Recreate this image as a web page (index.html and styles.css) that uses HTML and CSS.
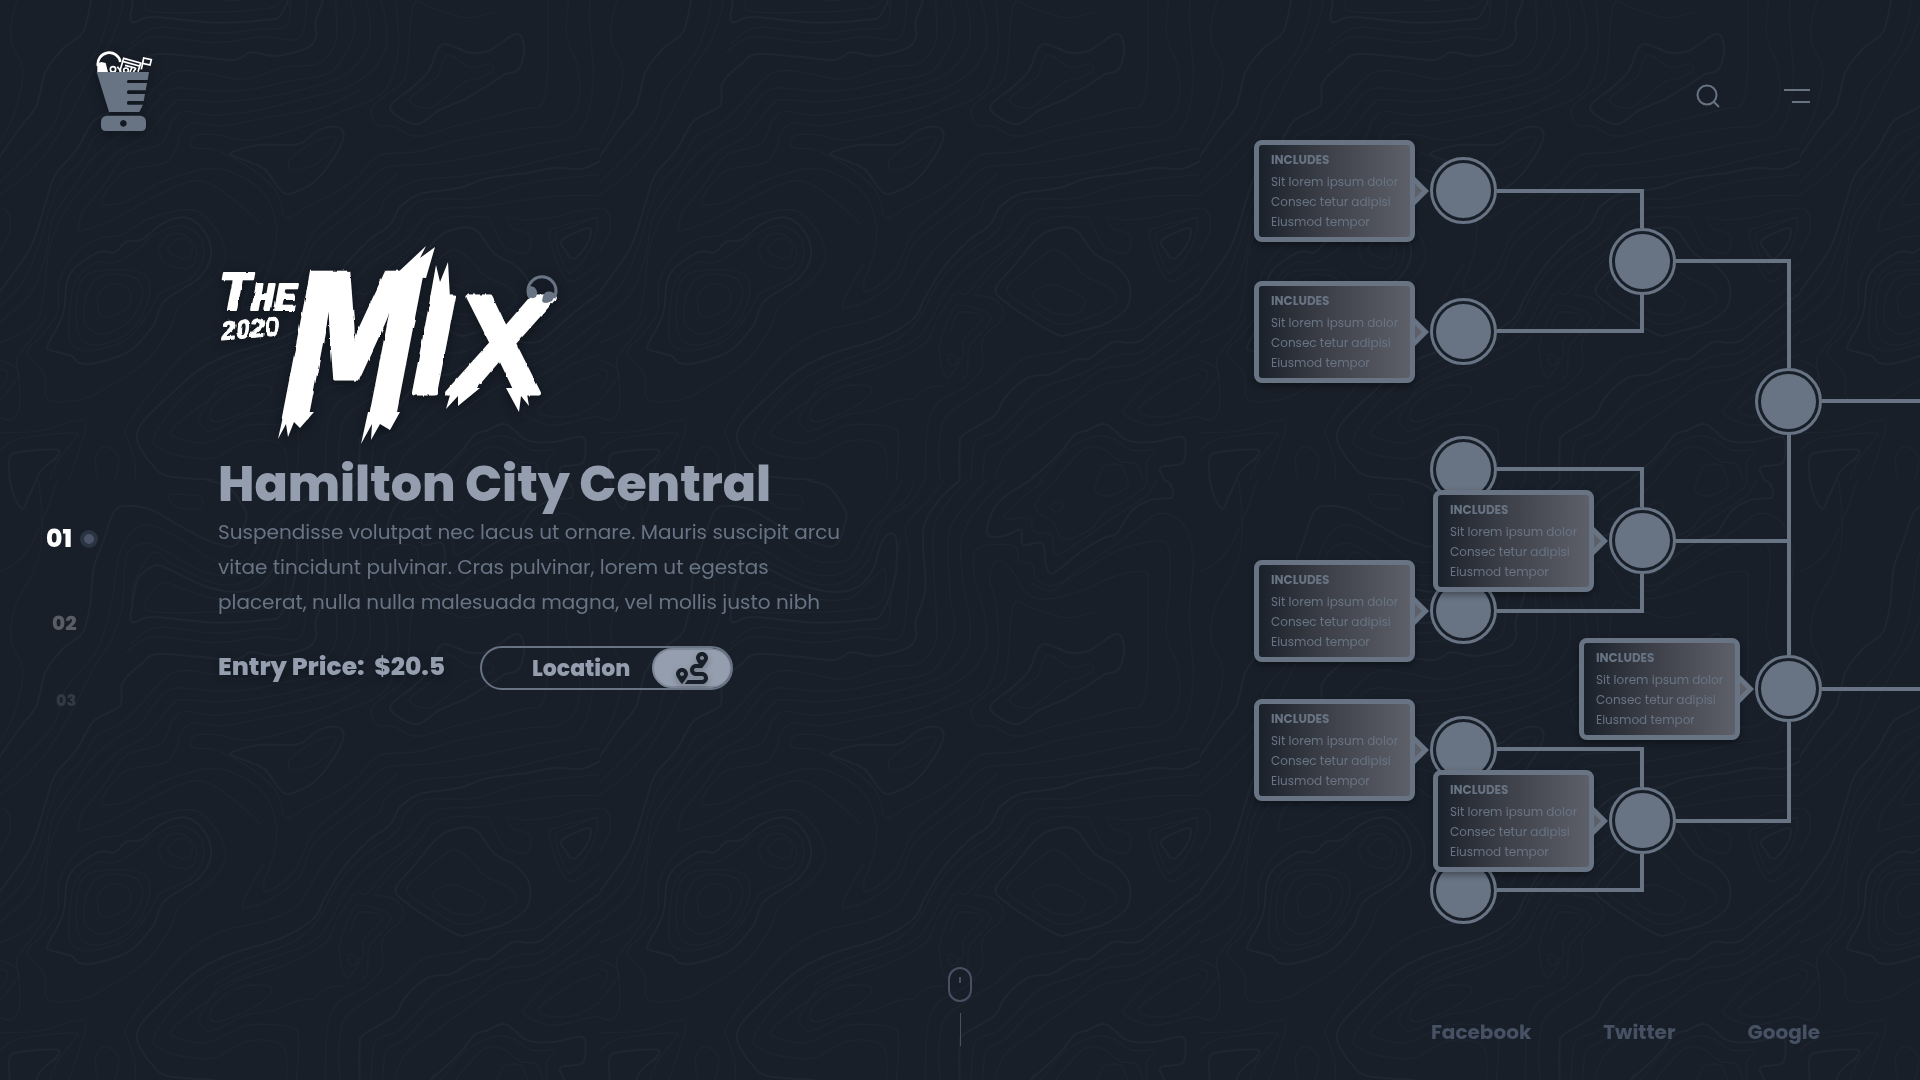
FILE: index.html
```html
<!DOCTYPE html>
<html lang="en">
<head>
<meta charset="utf-8">
<meta name="viewport" content="width=device-width, initial-scale=1">
<title>The 2020 Mix</title>
<link rel="stylesheet" href="styles.css">
</head>
<body>
<svg class="backdrop" aria-hidden="true">
  <defs>
    <pattern id="topo" x="0" y="480" width="600" height="600" patternUnits="userSpaceOnUse" viewBox="0 0 1568 1568">
      <g id="contours" class="contours"></g>
    </pattern>
  </defs>
  <rect width="100%" height="100%" fill="url(#topo)"/>
</svg>

<header class="topbar">
  <a class="brand" href="#" aria-label="Home">
    <svg viewBox="48 30 171 246" width="57" height="82">
      <g fill="none" stroke="#fff" stroke-width="5">
        <path d="M54 78A34 34 0 0 1 121 66" stroke-width="8"/>
        <path d="M119 95L131 55L182 69L174 95M128 64L178 78M184 88L191 54L214 59L210 75L188 70M135 76L166 84M150 96L156 82"/>
        <circle cx="99" cy="88" r="8"/>
        <circle cx="138" cy="91" r="7"/>
        <path d="M112 80L124 95M160 96L168 84"/>
      </g>
      <path fill="#fff" d="M52 96V76Q55 67 64 66L77 69L84 96z"/>
      <path fill="#687484" d="M50 96H207L203 120H145Q141 120 141 125T145 129H201L197 151H145Q141 151 141 157T145 162H195L191 183H145Q141 183 141 189T145 194H189L178 216H87z"/>
      <path fill="#687484" fill-rule="evenodd" d="M79 227H182Q198 230 198 245V258Q198 273 184 273H78Q63 273 63 258V245Q63 230 79 227zM130 240a10 10 0 1 0 .1 0z"/>
    </svg>
  </a>
  <div class="tools">
    <button class="icon-button" type="button" aria-label="Search">
      <svg viewBox="0 0 24 24" width="24" height="24" fill="none" stroke="#687484" stroke-width="2"><circle cx="11" cy="11" r="9.5"/><path d="M17.500 17.500L23 23"/></svg>
    </button>
    <button class="icon-button" type="button" aria-label="Menu">
      <svg viewBox="0 0 26 14" width="26" height="14" fill="none" stroke="#687484" stroke-width="2"><path d="M0 1H26M8 13H26"/></svg>
    </button>
  </div>
</header>

<main class="stage">
  <nav class="rail" aria-label="Slides">
    <a class="slide slide-current" href="#one">01<span class="marker"></span></a>
    <a class="slide slide-next" href="#two">02</a>
    <a class="slide slide-last" href="#three">03</a>
  </nav>

  <section class="hero">
    <svg class="wordmark" viewBox="0 0 345 200" width="345" height="200" role="img" aria-label="The 2020 Mix">
      <defs>
        <filter id="rough" x="-5%" y="-5%" width="110%" height="110%">
          <feTurbulence type="fractalNoise" baseFrequency="0.2 0.05" numOctaves="2" seed="4" result="n"/>
          <feDisplacementMap in="SourceGraphic" in2="n" scale="3" xChannelSelector="R" yChannelSelector="G"/>
        </filter>
      </defs>
      <g class="brush" filter="url(#rough)">
        <text class="brush-the" x="0" y="70"><tspan class="brush-t">T</tspan>HE</text>
        <text class="brush-year" x="4" y="100" transform="rotate(-5 4 100)">2020</text>
        <text class="brush-m" x="66" y="178">M</text>
        <text class="brush-ix" x="194" y="153">I</text>
        <text class="brush-ix" x="236" y="153">X</text>
      </g>
      <path fill="#fff" d="M66 172L60 199L68 184L70 197L76 182L82 188L96 172zM150 172L143 204L154 184L153 200L162 184L172 190L182 172zM176 36L208 6L202 18L217 7L208 38zM212 58L218 25L222 42L230 22L232 58zM234 148L228 169L240 156L240 166L262 148zM288 148L301 172L303 156L311 166L308 148z"/>
      <path fill="none" stroke="#687484" stroke-width="3" d="M312 58A14 14 0 1 1 336 58"/>
      <path fill="#687484" d="M309 49Q310 45 316 47Q321 51 318 57Q313 60 309 55zM325 56Q328 49 336 53Q338 55 334 61Q326 65 324 61z"/>
    </svg>

    <h1 class="title">Hamilton City Central</h1>
    <p class="lead">Suspendisse volutpat nec lacus ut ornare. Mauris suscipit arcu<br>vitae tincidunt pulvinar. Cras pulvinar, lorem ut egestas<br>placerat, nulla nulla malesuada magna, vel mollis justo nibh</p>
    <div class="actions">
      <p class="price">Entry Price:&nbsp; $20.5</p>
      <button class="location" type="button">
        <span class="location-label">Location</span>
        <span class="location-icon">
          <svg viewBox="0 0 512 512" width="32" height="32" fill="#181f29"><path d="M416 320h-96c-17.600 0-32-14.400-32-32s14.400-32 32-32h96s96-107 96-160-43-96-96-96-96 43-96 96c0 25.500 22.200 63.400 45.300 96H320c-52.900 0-96 43.100-96 96s43.100 96 96 96h96c17.600 0 32 14.400 32 32s-14.400 32-32 32H185.500c-16 24.800-33.800 47.700-47.300 64H416c52.900 0 96-43.100 96-96s-43.100-96-96-96zm0-256c17.700 0 32 14.300 32 32s-14.300 32-32 32-32-14.300-32-32 14.300-32 32-32zM96 256c-53 0-96 43-96 96s96 160 96 160 96-107 96-160-43-96-96-96zm0 128c-17.700 0-32-14.300-32-32s14.300-32 32-32 32 14.300 32 32-14.300 32-32 32z"/></svg>
        </span>
      </button>
    </div>
  </section>

  <section class="bracket" aria-label="Line-up">
    <svg class="links" viewBox="0 0 680 800" width="680" height="800" fill="none" stroke="#687484" stroke-width="4">
      <path d="M257 61H402V98M257 201H402V164M436 131H549V238M582 271H680M257 339H402V377M257 481H402V444M436 411H549M549 304V525M582 559H680M257 619H402V657M257 760H402V724M436 691H549V592"/>
    </svg>
    <div class="node" style="left:190px;top:27px"><div class="card"><h2>INCLUDES</h2><p>Sit lorem ipsum dolor</p><p>Consec tetur adipisi</p><p>Eiusmod tempor</p></div></div>
    <div class="node" style="left:190px;top:168px"><div class="card"><h2>INCLUDES</h2><p>Sit lorem ipsum dolor</p><p>Consec tetur adipisi</p><p>Eiusmod tempor</p></div></div>
    <div class="node" style="left:190px;top:306px"></div>
    <div class="node" style="left:190px;top:447px"><div class="card"><h2>INCLUDES</h2><p>Sit lorem ipsum dolor</p><p>Consec tetur adipisi</p><p>Eiusmod tempor</p></div></div>
    <div class="node" style="left:190px;top:586px"><div class="card"><h2>INCLUDES</h2><p>Sit lorem ipsum dolor</p><p>Consec tetur adipisi</p><p>Eiusmod tempor</p></div></div>
    <div class="node" style="left:190px;top:727px"></div>
    <div class="node" style="left:369px;top:98px"></div>
    <div class="node" style="left:369px;top:377px"><div class="card"><h2>INCLUDES</h2><p>Sit lorem ipsum dolor</p><p>Consec tetur adipisi</p><p>Eiusmod tempor</p></div></div>
    <div class="node" style="left:369px;top:657px"><div class="card"><h2>INCLUDES</h2><p>Sit lorem ipsum dolor</p><p>Consec tetur adipisi</p><p>Eiusmod tempor</p></div></div>
    <div class="node" style="left:515px;top:238px"></div>
    <div class="node" style="left:515px;top:525px"><div class="card"><h2>INCLUDES</h2><p>Sit lorem ipsum dolor</p><p>Consec tetur adipisi</p><p>Eiusmod tempor</p></div></div>
  </section>
</main>

<footer class="bottom">
  <a class="scroll" href="#more" aria-label="Scroll down">
    <svg viewBox="0 0 26 80" width="26" height="80" fill="none" stroke="#475164"><rect x="2" y="1" width="22" height="33" rx="11" stroke-width="2"/><path d="M13 10V16" stroke-width="2"/><path d="M13.500 46V79"/></svg>
  </a>
  <nav class="social" aria-label="Social">
    <a href="#facebook">Facebook</a>
    <a href="#twitter">Twitter</a>
    <a href="#google">Google</a>
  </nav>
</footer>
<script src="contours.js"></script>
</body>
</html>
```

FILE: styles.css
```css
* { box-sizing: border-box; }

body {
  margin: 0;
  min-height: 100vh;
  display: flex;
  flex-direction: column;
  background: #181f29;
  color: #687484;
  font-family: Poppins, Inter, "Open Sans", sans-serif;
  overflow-x: hidden;
}

a { color: inherit; text-decoration: none; }
h1, h2, p { margin: 0; }
button { font: inherit; color: inherit; background: none; border: 0; padding: 0; cursor: pointer; }
svg { display: block; }

.backdrop {
  position: fixed;
  inset: 0;
  width: 100%;
  height: 100%;
  z-index: -1;
}
.contours { fill: none; stroke: #1d242e; stroke-width: 3; }
.contours .major { stroke: #1f2630; stroke-width: 5; }

.topbar {
  height: 130px;
  padding: 50px 110px 0 96px;
  display: flex;
  justify-content: space-between;
  align-items: flex-start;
}
.brand { filter: drop-shadow(0 3px 6px rgba(0, 0, 0, 0.3)); }
.tools {
  height: 92px;
  display: flex;
  align-items: center;
  gap: 64px;
}

.stage {
  display: grid;
  grid-template-columns: 218px 1fr 680px;
}

.rail {
  padding: 393px 0 0 46px;
  display: flex;
  flex-direction: column;
  align-items: flex-start;
  font-weight: 800;
}
.slide { display: flex; align-items: center; height: 32px; }
.slide-current { gap: 8px; font-size: 25px; color: #fff; }
.slide-next { margin: 52px 0 0 6px; font-size: 20px; color: #595e66; }
.slide-last { margin: 45px 0 0 10px; font-size: 16px; color: #333a44; }
.marker {
  width: 18px;
  height: 18px;
  border: 4px solid #2a3341;
  border-radius: 50%;
  background: #4a5468;
}

.hero { padding-top: 110px; }
.wordmark { overflow: visible; filter: drop-shadow(0 3px 6px rgba(0, 0, 0, 0.4)); }
.brush {
  fill: #fff;
  stroke: #fff;
  stroke-width: 2;
  stroke-linejoin: round;
  font-family: "Liberation Sans", sans-serif;
  font-weight: 700;
  font-style: italic;
}
.brush-the { font-family: "Liberation Mono", monospace; font-size: 38px; }
.brush-t { font-size: 56px; }
.brush-year { font-size: 26px; stroke-width: 1; }
.brush-m { font-family: "Liberation Mono", monospace; font-size: 220px; stroke-width: 3; }
.brush-ix { font-size: 140px; stroke-width: 5; }

.title {
  margin-top: 14px;
  font-size: 49px;
  line-height: 60px;
  font-weight: 800;
  color: #949eae;
}
.lead { font-size: 20px; line-height: 35px; margin-top: 1px; white-space: nowrap; }
.actions { display: flex; align-items: center; gap: 35px; margin-top: 26px; }
.price { font-size: 25px; line-height: 36px; padding-bottom: 2px; font-weight: 800; color: #949eae; filter: drop-shadow(0 3px 4px rgba(0, 0, 0, 0.3)); white-space: nowrap; }
.location {
  width: 253px;
  height: 44px;
  border: 2px solid #687484;
  border-radius: 22px;
  display: flex;
  align-items: stretch;
  overflow: hidden;
  color: #949eae;
}
.location-label {
  flex: 1;
  align-self: center;
  text-align: right;
  padding-right: 22px;
  font-size: 22px;
  font-weight: 800;
}
.location-icon {
  width: 80px;
  margin-right: -1px;
  border: 2px solid #7c8797;
  border-radius: 22px;
  background: #949eae;
  display: flex;
  align-items: center;
  justify-content: center;
}
.location-icon svg { filter: drop-shadow(0 3px 3px rgba(0, 0, 0, 0.25)); }

.bracket { position: relative; height: 800px; }
.node {
  position: absolute;
  width: 67px;
  height: 67px;
  border: 3px solid #687484;
  border-radius: 50%;
  padding: 3px;
  background: #181f29;
}
.node::before {
  content: "";
  display: block;
  height: 100%;
  border-radius: 50%;
  background: #687484;
}
.card {
  position: absolute;
  right: 79px;
  top: -20px;
  width: 161px;
  height: 102px;
  padding: 6px 0 0 12px;
  border: 5px solid #687484;
  border-radius: 8px;
  background: linear-gradient(90deg, #1a212b, #3a3d45 40%, #5d6068);
  box-shadow: 0 3px 6px rgba(0, 0, 0, 0.35);
  white-space: nowrap;
}
.card::before, .card::after {
  content: "";
  position: absolute;
  left: 100%;
  top: 50%;
}
.card::before {
  margin: -15px 0 0 4px;
  border: 15px solid transparent;
  border-left-color: #687484;
  border-right-width: 0;
}
.card::after {
  margin: -7px 0 0 5px;
  border: 7px solid transparent;
  border-left-color: #5d6068;
  border-right-width: 0;
}
.card h2 { font-size: 12px; line-height: 18px; font-weight: 700; margin-bottom: 3px; }
.card p { font-size: 12px; line-height: 20px; }

.bottom {
  flex: 1;
  padding: 37px 100px 0;
  display: grid;
  grid-template-columns: 1fr auto 1fr;
  align-items: start;
}
.scroll { grid-column: 2; }
.social {
  height: 130px;
  display: flex;
  justify-content: flex-end;
  align-items: center;
  gap: 72px;
  font-size: 20px;
  font-weight: 700;
  color: #475164;
}
```

FILE: contours.js
```js
// Contour lines of one background tile, as x,y pairs. "M" marks a major line, "z" closes it.
const lines = [
  "M 0,722 50,650 95,590 120,500 165,440 215,400 235,330 245,230 270,160 300,80 340,68 400,80 470,120 550,160 615,170 643,100 635,70 600,20 540,0",
  "M 1568,735 1520,755 1450,752 1380,765 1270,780 1200,805 1100,820 1045,855 1020,900 960,945 900,1010 850,1090 820,1145 740,1195 600,1240 520,1280 440,1350 370,1420 360,1470 400,1530 440,1558 560,1568",
  "M 345,372 400,358 560,373 700,365 735,350 770,260 775,160 760,140 735,165 715,230 680,275 630,292 560,285 500,262 430,228 400,225 360,260 345,330 z",
  "M 940,0 880,60 845,130 850,250 848,300 825,370 826,410 800,440 720,460 655,450 615,470 520,462 410,455 370,480 320,530 313,590 245,630 200,705 145,770 120,840 80,960 0,1075",
  "M 1568,1080 1500,1130 1410,1205 1340,1208 1280,1250 1240,1255 1180,1290 1120,1300 1060,1350 1030,1400 950,1450 940,1480 940,1568",
  "M 1125,0 1050,50 1018,100 1015,145 1060,145 1100,130 1105,170 1155,165 1165,220 1185,243 1260,185 1320,150 1350,140 1390,80 1440,52 1495,45 1490,10 1475,0",
  "M 1125,1568 1200,1500 1240,1450 1270,1440 1320,1422 1380,1465 1450,1468 1520,1455 1530,1490 1520,1525 1465,1535 1475,1568",
  "M 1020,590 1080,540 1120,500 1145,440 1170,430 1230,452 1280,445 1350,402 1370,440 1355,495 1320,508 1270,540 1210,575 1150,600 1095,637 1050,625 z",
  "M 605,712 680,692 780,690 830,655 880,645 898,670 870,730 820,790 755,820 725,800 690,755 620,725 z",
  "M 1035,1065 1080,1010 1150,930 1210,908 1250,920 1290,975 1350,1010 1385,1060 1375,1120 1320,1160 1250,1180 1200,1190 1120,1145 1050,1095 z",
  "M 1470,940 1540,910 1535,950 1500,990 1475,965 z",
  "M 125,1215 165,1135 175,1050 200,1010 260,972 300,973 330,945 370,940 430,895 490,883 535,920 552,980 520,1040 430,1100 400,1165 340,1230 260,1260 210,1263 185,1243 135,1230 z",
  "M 25,1568 25,1510 50,1495 145,1488 150,1505 110,1540 95,1568",
  "M 25,0 40,50 60,75 75,45 95,0",
  "1070,575 1110,540 1145,510 1170,457 1230,490 1280,480 1288,500 1260,515 1210,530 1150,580 1110,597 z",
  "755,735 780,710 830,680 875,672 870,700 820,745 765,758 z",
  "1065,1075 1100,1030 1180,968 1220,985 1270,1035 1330,1065 1348,1100 1300,1135 1210,1162 1140,1130 z",
  "1132,1080 1175,1058 1220,1070 1268,1098 1250,1130 1200,1135 1150,1110 z",
  "1435,915 1500,895 1568,880",
  "1435,915 1440,950 1470,1030 1500,1048 1568,1000",
  "1452,925 1500,905 1560,885 1545,960 1500,1020 1480,1020 1460,970 z",
  "1320,880 1380,888 1450,880 1510,865 1568,858",
  "1320,880 1340,910 1385,930 1375,975 1320,960 1290,910 1270,882 1190,880 1130,900 1090,950 1020,1010 960,1080 930,1080 880,1150 850,1210 740,1270 620,1310 530,1370 455,1430 455,1455 540,1470 650,1425 760,1430 780,1460 775,1568",
  "255,1115 260,1080 290,1057 325,1060 343,1090 325,1125 270,1142 z",
  "223,1160 225,1090 255,1040 310,1030 360,1045 372,1090 340,1150 270,1187 z",
  "203,1180 203,1080 230,1030 310,1018 375,1030 392,1070 370,1140 320,1195 240,1215 z",
  "180,1190 185,1100 200,1045 250,1000 300,1000 360,965 400,930 470,903 520,930 533,980 500,1040 420,1080 390,1130 330,1200 240,1230 195,1220 z",
  "438,965 470,937 500,950 498,980 470,988 z",
  "415,965 440,930 480,927 512,960 505,1005 470,1015 430,1000 z",
  "70,1235 110,1190 150,1130 155,1050 190,985 250,940 320,925 390,885 480,862 530,875 580,940 585,1000 540,1060 470,1115 440,1180 380,1260 290,1320 220,1355 140,1363 118,1340 115,1290 z",
  "0,1115 60,1050 100,960 130,860 160,790 215,730 250,670 310,640 360,595 400,550 460,500 540,505 640,520 740,490 830,480 870,440 880,380 870,150 900,70 960,0",
  "0,1155 80,1080 120,980 140,880 200,790 240,730 310,670 365,640 400,590 450,545 540,550 640,550 760,525 860,505 910,440 928,380 915,300 912,140 960,60 1010,0",
  "0,1210 90,1160 115,1080 130,960 180,850 250,770 310,710 380,670 430,610 470,575 560,580 680,570 800,545 900,510 960,440 967,370 950,280 945,150 1000,60 1060,0",
  "205,920 215,870 270,800 330,720 420,690 450,630 480,605 560,615 680,600 800,570 900,545 980,490 1010,430 1005,350 980,260 985,180 1080,172 1095,210 1130,220 1140,260 1185,275 1250,245 1340,190 1420,165 1480,165 1490,260 1480,400 1510,490 1510,590 1460,640 1360,650 1200,680 1090,710 990,720 930,780 870,820 800,855 748,882 720,810 650,750 560,705 505,700 505,670 560,665 650,680 760,655 880,610 1000,555 1040,450 1035,330 1018,250 1040,210 1075,235 1120,300 1180,310 1270,285 1350,250 1420,240 1432,280 1425,560 1360,600 1200,640 1090,670 1030,645 985,640 970,600 1010,560 1060,510 1080,330 1130,335 1220,360 1290,345",
  "268,850 270,825 330,760 440,735 480,650 520,635 580,643 700,620 840,595 940,550",
  "268,850 330,840 420,790 540,755 620,770 690,820 722,900 715,980 690,1050 700,1075 770,1020 820,920 900,850 960,790 1010,750 1120,742 1280,715 1400,690 1500,670 1540,600 1550,500 1540,350 1550,200 1520,110 1460,88 1400,130 1310,195 1230,250 1180,290 1130,270",
  "205,920 300,885 400,830 500,787 560,800 640,860 680,900",
  "0,790 60,730 140,640 175,540 250,450 290,330 310,200 350,130 400,120 480,160 560,210 650,205 700,120 760,50 790,0",
  "0,822 70,770 130,700 190,600 240,500 290,420 320,330 330,200 380,165 440,190 520,235 600,250 670,220 725,120 800,50 820,0",
  "345,325 350,270 400,190 450,220 560,270 640,265 700,210 740,110 810,60 850,0",
  "330,450 400,410 560,425 690,410 780,415 800,340 808,200 800,120 860,50 900,0",
  "340,430 410,385 560,400 680,390 750,380 760,310 785,150",
  "385,340 420,270 480,285 560,310 650,310 710,260 745,235 740,310 700,335 560,345 z",
  "0,690 40,600 60,500 30,420 40,330 100,210 110,100 100,0",
  "0,240 60,200 110,110 150,0",
  "0,1405 30,1410 50,1380 50,1300 45,1250 90,1190 120,1140",
  "0,1255 35,1270 45,1300 0,1360",
  "0,1278 18,1285 15,1310 0,1330",
  "0,855 22,870 25,920 0,970",
  "1568,770 1460,780 1340,800 1240,832 1110,835 1060,870 1035,920 940,990 880,1060 830,1150 760,1210 620,1260 540,1300 460,1370 405,1450 410,1480 470,1505 560,1510 650,1465 740,1480 750,1568",
  "1568,825 1480,825 1380,835 1250,855 1130,865 1060,940 960,1010 900,1080 860,1160 800,1215 650,1270 560,1320",
  "548,1400 570,1360 630,1325 700,1322 705,1345 650,1385 570,1415 z",
  "325,1440 370,1370 420,1310 480,1240 580,1180 700,1150 780,1110 840,1010 920,920 990,870 1010,830 1090,785 1200,775 1320,755 1450,725 1568,700",
  "635,1120 640,1090 690,1000",
  "635,1120 700,1100 780,1040 820,950 920,870 980,820 1040,765",
  "325,1440 350,1510 355,1568",
  "518,1410 570,1330 650,1290 720,1265",
  "518,1410 550,1440 640,1400 720,1385 780,1360 820,1355 850,1330 900,1320",
  "890,1270 888,1210 910,1150 935,1112 1000,1125 1020,1140 1010,1170 965,1220 960,1290 940,1310",
  "890,1270 910,1300 950,1240 950,1200 1000,1145 940,1130 915,1180",
  "912,1240 935,1250 925,1268 912,1262 z",
  "975,1085 1030,1095 1055,1140 1000,1200 1000,1270 960,1320 880,1370 855,1440 850,1568",
  "975,1085 1030,1020 1080,970",
  "1568,1040 1480,1110 1400,1170 1300,1185 1220,1230 1110,1250 1040,1310 960,1360 900,1410 885,1500 890,1568",
  "1568,1115 1500,1160 1420,1230 1340,1245 1260,1290 1150,1330 1090,1390 1040,1440 980,1470 970,1568",
  "1568,1150 1480,1215 1400,1265 1310,1280 1230,1340 1130,1390 1060,1460 1010,1490 1000,1568",
  "1568,1180 1500,1240 1400,1300 1310,1320 1220,1380 1140,1440 1060,1500 1030,1568",
  "1568,1240 1480,1275 1390,1360 1370,1395 1440,1425 1520,1410 1568,1400",
  "1568,1290 1490,1320 1410,1380 1430,1400 1500,1400 1568,1365",
  "1150,1568 1220,1490 1290,1455 1340,1460 1390,1490 1450,1490 1430,1520 1430,1568",
  "1190,1568 1260,1490 1310,1485 1360,1520 1400,1525 1420,1568",
  "1300,1568 1320,1530 1360,1530 1380,1568",
  "1175,70 1195,57 1212,70 1195,83 z",
  "1190,0 1140,60 1150,90 1185,110 1210,155 1280,130 1320,85 1380,50 1420,20 1430,0",
  "1160,0 1090,60 1055,100 1120,100 1135,135 1180,145 1190,195 1240,170 1310,120 1370,80 1430,40 1455,0",
  "1300,0 1295,30 1330,42 1375,20 1380,0",
  "440,40 460,70 520,75 525,45 480,38 z",
  "255,1568 250,1510 275,1480 310,1510 300,1568",
  "0,1445 100,1440 200,1412 225,1420 210,1480 180,1568",
  "0,1490 50,1460 190,1445 195,1460 150,1520 130,1568"
];

const group = document.getElementById("contours");
for (const line of lines) {
  const tokens = line.split(" ");
  const major = tokens[0] === "M";
  const closed = tokens[tokens.length - 1] === "z";
  const pts = tokens.filter(t => t.includes(",")).map(t => t.split(",").map(Number));
  const n = pts.length;
  const at = i => closed ? pts[(i + n) % n] : pts[Math.max(0, Math.min(n - 1, i))];
  let d = "M" + pts[0];
  for (let i = 0; i < (closed ? n : n - 1); i++) {
    const [a, b, c, e] = [at(i - 1), at(i), at(i + 1), at(i + 2)];
    const c1 = [b[0] + (c[0] - a[0]) / 6, b[1] + (c[1] - a[1]) / 6];
    const c2 = [c[0] - (e[0] - b[0]) / 6, c[1] - (e[1] - b[1]) / 6];
    d += "C" + c1 + " " + c2 + " " + c;
  }
  const path = document.createElementNS("http://www.w3.org/2000/svg", "path");
  path.setAttribute("d", d);
  if (major) path.setAttribute("class", "major");
  group.appendChild(path);
}
```
